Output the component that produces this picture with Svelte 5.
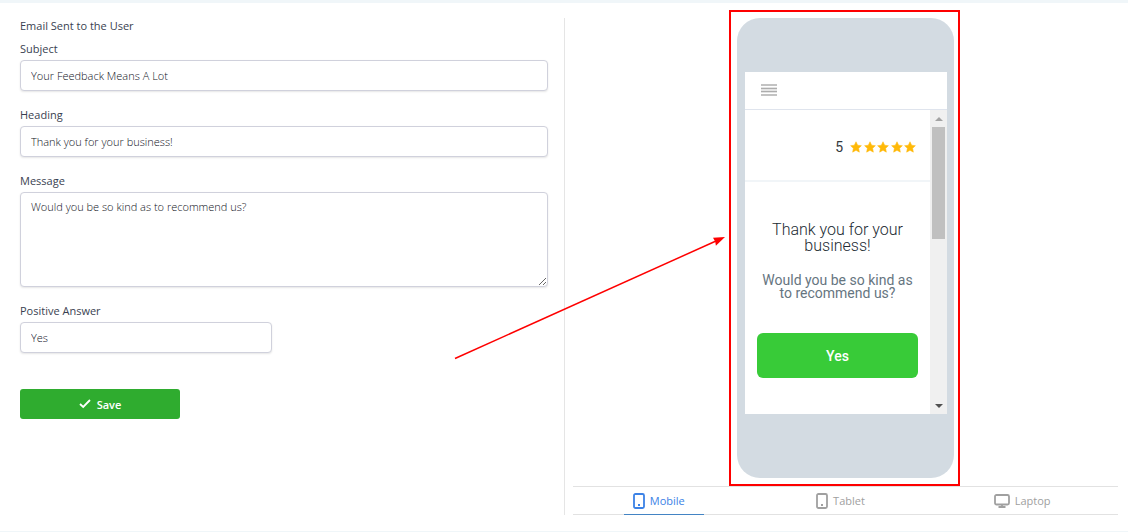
<script lang="ts">
    let heading = $state('Thank you for your business!');
    let message = $state('Would you be so kind as to recommend us?');
    let subject = $state('Your Feedback Means A Lot');
    let answer = $state('Yes');
    let device = $state('Mobile');

    const devices = ['Mobile', 'Tablet', 'Laptop'];
    const stars = [1, 2, 3, 4, 5];
</script>

<main class="card">
    <form class="editor" onsubmit={(e) => e.preventDefault()}>
        <h2>Email Sent to the User</h2>
        <div class="field">
            <label for="subject">Subject</label>
            <input id="subject" type="text" bind:value={subject} />
        </div>
        <div class="field">
            <label for="heading">Heading</label>
            <input id="heading" type="text" bind:value={heading} />
        </div>
        <div class="field">
            <label for="message">Message</label>
            <textarea id="message" bind:value={message}></textarea>
        </div>
        <div class="field short">
            <label for="answer">Positive Answer</label>
            <input id="answer" type="text" bind:value={answer} />
        </div>
        <button class="save" type="submit">
            <svg width="12" height="10" viewBox="0 0 12 10">
                <path d="M1 5 L4.2 8 L11 1" fill="none" stroke="#fff" stroke-width="1.8" />
            </svg>
            Save
        </button>
    </form>

    <section class="preview">
        <div class="phone">
            <div class="screen">
                <header>
                    <button class="menu" aria-label="Menu">
                        <svg width="16" height="12" viewBox="0 0 16 12">
                            <path d="M0 1h16M0 11h16" stroke="#c3c3c3" stroke-width="2" />
                            <path d="M0 3.5h16M0 5.5h16M0 6.5h16M0 8.5h16" stroke="#e4e4e4" />
                            <path d="M0 4.5h16M0 7.5h16" stroke="#adadad" />
                        </svg>
                    </button>
                </header>
                <div class="viewport">
                    <div class="content">
                        <div class="rating">
                            <span>5</span>
                            <div class="stars">
                                {#each stars as star (star)}
                                    <svg width="12" height="12" viewBox="0 0 24 24">
                                        <path
                                            d="M12 1.5l3.3 6.9 7.5 1-5.5 5.3 1.4 7.6-6.7-3.7-6.7 3.7 1.4-7.6L1.2 9.4l7.5-1z"
                                            fill="#ffb908"
                                            stroke="#ffb908"
                                            stroke-linejoin="round"
                                        />
                                    </svg>
                                {/each}
                            </div>
                        </div>
                        <div class="question">
                            <h3>{heading}</h3>
                            <p>{message}</p>
                            <button class="answer">{answer}</button>
                        </div>
                    </div>
                    <div class="scrollbar">
                        <button aria-label="Scroll up">
                            <svg width="8" height="4" viewBox="0 0 8 4"><path d="M0 4L4 0l4 4z" fill="#a3a3a3" /></svg>
                        </button>
                        <div class="thumb"></div>
                        <button aria-label="Scroll down">
                            <svg width="8" height="4" viewBox="0 0 8 4"><path d="M0 0h8L4 4z" fill="#505050" /></svg>
                        </button>
                    </div>
                </div>
            </div>
            <!-- callout frame and pointer -->
            <div class="frame"></div>
            <svg class="arrow" width="272" height="124" viewBox="0 0 272 124">
                <path d="M2 122.5L263 5" stroke="#fe0000" stroke-width="1.5" />
                <path d="M272 1l-12 .8 2.2 3.6.7 4.4z" fill="#fe0000" />
            </svg>
        </div>

        <nav class="tabs">
            {#each devices as name (name)}
                <button class:active={device === name} onclick={() => (device = name)}>
                    {#if name === 'Laptop'}
                        <svg width="16" height="14" viewBox="0 0 16 14" fill="none" stroke="currentColor">
                            <rect x="1" y="1" width="14" height="9.5" rx="1.5" stroke-width="1.8" />
                            <path d="M8 10.5v2.5M4.5 13h7" stroke-width="1.8" />
                        </svg>
                    {:else}
                        <svg width="12" height="16" viewBox="0 0 12 16" fill="none" stroke="currentColor">
                            <rect x="1" y="1" width="10" height="14" rx="1.5" stroke-width="1.8" />
                            <path d="M5 12h2" stroke-width="1.8" />
                        </svg>
                    {/if}
                    {name}
                </button>
            {/each}
        </nav>
    </section>
</main>

<style>
    :global(body) {
        margin: 0;
        background: #f0f6f9;
        font-family: 'Open Sans', 'Segoe UI', sans-serif;
        font-size: 11px;
    }
    .card {
        display: grid;
        grid-template-columns: 1fr 1fr;
        margin: 3px 0 1px;
        padding: 15px 10px 16px;
        background: #fff;
    }
    button {
        border: 0;
        margin: 0;
        padding: 0;
        background: none;
        font-family: inherit;
        cursor: pointer;
    }
    /* form */
    .editor {
        padding: 0 16px 0 10px;
    }
    h2 {
        margin: 0 0 7px;
        font-size: 11px;
        line-height: 16px;
        font-weight: 500;
        color: #3a3f51;
    }
    .field {
        display: flex;
        flex-direction: column;
        gap: 3px;
        margin-bottom: 16px;
    }
    .field.short {
        width: 252px;
        margin-bottom: 36px;
    }
    label {
        line-height: 16px;
        font-weight: 500;
        color: #3a3f51;
    }
    input,
    textarea {
        box-sizing: border-box;
        width: 100%;
        height: 31px;
        margin: 0;
        padding: 6px 10px 7px;
        border: 1px solid #d0d1dc;
        border-radius: 4px;
        box-shadow: 0 1px 2px rgba(0, 0, 0, 0.1);
        background: #fff;
        color: #10121c;
        font-family: inherit;
        font-size: 11px;
        line-height: 16px;
        font-weight: 300;
    }
    textarea {
        height: 95px;
    }
    .save {
        display: flex;
        align-items: center;
        justify-content: center;
        gap: 6px;
        width: 160px;
        height: 30px;
        border-radius: 3px;
        background: #2fac2f;
        color: #fff;
        font-size: 11px;
        font-weight: 600;
    }
    /* preview */
    .preview {
        display: flex;
        flex-direction: column;
        align-items: center;
        padding-left: 8px;
        border-left: 1px solid #e5e5e5;
    }
    .phone {
        position: relative;
        box-sizing: border-box;
        width: 217px;
        height: 460px;
        padding: 54px 7px 64px 8px;
        border-radius: 23px;
        background: #d3dbe2;
        font-family: Roboto, sans-serif;
    }
    .screen {
        display: flex;
        flex-direction: column;
        height: 100%;
        background: #fff;
    }
    header {
        display: flex;
        align-items: center;
        box-sizing: border-box;
        height: 38px;
        padding: 0 16px 1px;
        border-bottom: 1px solid #dfe4ed;
    }
    .menu {
        display: flex;
    }
    .viewport {
        display: flex;
        flex: 1;
    }
    .content {
        flex: 1;
    }
    .rating {
        display: flex;
        align-items: center;
        justify-content: flex-end;
        gap: 7px;
        height: 70px;
        padding: 4px 14px 0 0;
        box-sizing: border-box;
        font-size: 14px;
        line-height: 16px;
        color: #33393e;
    }
    .stars {
        display: flex;
        justify-content: space-between;
        width: 66px;
    }
    .question {
        padding: 40px 12px 0;
        border-top: 2px solid #f1f5f8;
        text-align: center;
    }
    h3 {
        margin: 0 0 20px;
        font-size: 16px;
        line-height: 16px;
        font-weight: 300;
        color: #222b33;
    }
    p {
        margin: 0 0 33px;
        font-size: 14px;
        line-height: 13px;
        color: #66757f;
    }
    .answer {
        width: 100%;
        height: 45px;
        border-radius: 6px;
        background: #38cb38;
        color: #fff;
        font-size: 14px;
        font-weight: 500;
    }
    .scrollbar {
        display: flex;
        flex-direction: column;
        width: 17px;
        background: #f0f0f0;
    }
    .scrollbar button {
        display: flex;
        align-items: center;
        justify-content: center;
        height: 17px;
    }
    .thumb {
        height: 112px;
        margin: 0 2px auto;
        background: #c0c0c0;
    }
    .frame {
        position: absolute;
        inset: -8px -6px -8px -8px;
        border: 2px solid #fe0000;
        pointer-events: none;
    }
    .arrow {
        position: absolute;
        top: 218px;
        right: calc(100% + 12px);
        pointer-events: none;
    }
    .tabs {
        display: grid;
        grid-template-columns: repeat(3, 1fr);
        justify-items: center;
        width: 100%;
        height: 28px;
        margin-top: 8px;
        border-top: 1px solid #e2e2e2;
        box-shadow: inset 0 -1px #e2e2e2;
    }
    .tabs button {
        display: flex;
        align-items: center;
        justify-content: center;
        gap: 5px;
        width: 80px;
        padding: 0 10px 1px 0;
        color: #a0a0a0;
        font-size: 11px;
        line-height: 16px;
    }
    .tabs .active {
        color: #3b82e6;
        box-shadow: inset 0 -1px #4384c4;
    }
</style>
